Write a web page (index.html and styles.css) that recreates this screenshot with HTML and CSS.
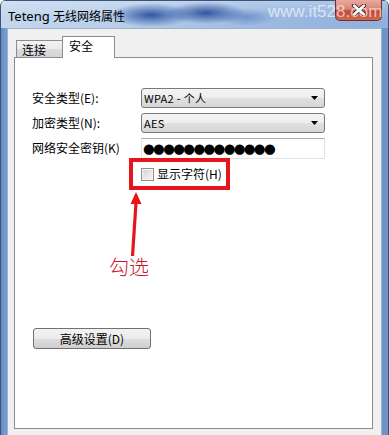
FILE: index.html
```html
<!DOCTYPE html>
<html lang="zh">
<head>
<meta charset="utf-8">
<title>Teteng 无线网络属性</title>
<link rel="stylesheet" href="styles.css">
</head>
<body>
<div class="window">
  <div class="titlebar">
    <span class="title">Teteng <span class="title-cjk">无线网络属性</span></span>
    <span class="watermark">www.it528.com</span>
    <span class="close"><svg width="16" height="12" viewBox="0 0 16 12"><path d="M3 1.5 L13 10.5 M13 1.5 L3 10.5" stroke="#3a2020" stroke-width="4.2" stroke-linecap="round"/><path d="M3 1.5 L13 10.5 M13 1.5 L3 10.5" stroke="#ffffff" stroke-width="2.4" stroke-linecap="round"/></svg></span>
  </div>
  <div class="client">
    <div class="tabs">
      <div class="tab">连接</div>
      <div class="tab active">安全</div>
    </div>
    <div class="panel">
      <div class="form">
        <span class="label">安全类型(E):</span>
        <div class="combo"><span>WPA2 - 个人</span><svg class="caret" width="7" height="4" viewBox="0 0 7 4"><path d="M0 0 H7 L3.5 4 Z" fill="#000"/></svg></div>
        <span class="label">加密类型(N):</span>
        <div class="combo"><span>AES</span><svg class="caret" width="7" height="4" viewBox="0 0 7 4"><path d="M0 0 H7 L3.5 4 Z" fill="#000"/></svg></div>
        <span class="label">网络安全密钥(K)</span>
        <div class="field"><span class="dots">●●●●●●●●●●●●●</span></div>
      </div>
      <div class="highlight">
        <span class="checkbox"></span>
        <span class="check-label">显示字符(H)</span>
      </div>
      <div class="annot">
        <svg class="arrow" width="40" height="66" viewBox="0 0 40 66"><path d="M27 12 L23.5 65" stroke="#e8141c" stroke-width="3.2" fill="none"/><path d="M27 1 L32.5 13 L21.5 13 Z" fill="#e8141c"/></svg>
        <span class="note">勾选</span>
      </div>
      <button class="btn">高级设置(D)</button>
    </div>
  </div>
</div>
</body>
</html>
```
FILE: styles.css
```css
* { box-sizing: border-box; }
html, body { margin: 0; padding: 0; }
body {
  width: 389px;
  height: 435px;
  overflow: hidden;
  font-family: "Noto Sans CJK SC", "Noto Sans", sans-serif;
  font-size: 12px;
  color: #000;
}
.window {
  width: 389px;
  height: 435px;
  display: flex;
  flex-direction: column;
  border-left: 1px solid #3b5478;
  border-right: 1px solid #3b5478;
  background: linear-gradient(90deg, #5f86bf 0, #7399cf 3px, #6d93c9 100%);
  border-radius: 6px 6px 0 0;
  overflow: hidden;
}
.titlebar {
  position: relative;
  height: 28px;
  flex: none;
  display: flex;
  align-items: center;
  padding-left: 7px;
  border-top: 1px solid #3b5478;
  background:
    radial-gradient(ellipse 42px 12px at 150px 14px, rgba(40,80,160,0.95), rgba(40,80,160,0)),
    radial-gradient(ellipse 40px 11px at 205px 12px, rgba(35,72,150,0.9), rgba(35,72,150,0)),
    radial-gradient(ellipse 30px 9px at 245px 16px, rgba(80,120,190,0.6), rgba(80,120,190,0)),
    linear-gradient(180deg, rgba(255,255,255,0.25), rgba(255,255,255,0) 60%),
    linear-gradient(90deg, #c3d7ee 0, #b9cfea 110px, #9ebbe2 250px, #8fb0dc 100%);
}
.title {
  font-family: "Noto Sans", "Noto Sans CJK SC", sans-serif;
  font-size: 13px;
  color: #000;
  line-height: 16px;
  margin-top: 2px;
}
.title-cjk {
  font-family: "Noto Sans CJK SC", sans-serif;
  font-size: 12px;
}
.watermark {
  position: absolute;
  left: 267px;
  top: 0;
  font-family: "Liberation Sans", sans-serif;
  font-size: 17px;
  line-height: 22px;
  color: rgba(255,255,255,0.62);
  z-index: 2;
}
.close {
  position: absolute;
  right: 6px;
  top: -1px;
  width: 47px;
  height: 21px;
  display: flex;
  align-items: center;
  justify-content: center;
  border: 1px solid #6a3030;
  border-top: none;
  border-radius: 0 0 5px 5px;
  background: linear-gradient(180deg, #e8aa9c 0, #d88577 45%, #c24a36 55%, #d0684c 100%);
  z-index: 1;
}
.client {
  flex: 1;
  margin: 0 6px;
  display: flex;
  flex-direction: column;
  background: #f0f0f0;
  border: 1px solid #9eb2cb;
  border-bottom: none;
  padding: 7px 0 6px 0;
}
.tabs {
  display: flex;
  align-items: flex-end;
  height: 21px;
  padding-left: 8px;
  flex: none;
}
.tab {
  width: 46px;
  height: 17px;
  border: 1px solid #898c95;
  border-bottom: none;
  border-right: none;
  background: linear-gradient(180deg, #f2f2f2 0, #ebebeb 50%, #dcdcdc 51%, #d4d4d4 100%);
  font-size: 12px;
  line-height: 16px;
  padding-left: 5px;
  padding-top: 1px;
}
.tab.active {
  width: 53px;
  height: 22px;
  margin-bottom: -1px;
  background: #fff;
  border-right: 1px solid #898c95;
  padding-left: 6px;
  padding-top: 0;
  line-height: 18px;
  position: relative;
  z-index: 1;
}
.panel {
  flex: 1;
  margin: 0 8px 0 6px;
  background: #fff;
  border: 1px solid #898c95;
  padding: 30px 0 0 17px;
  display: flex;
  flex-direction: column;
  align-items: flex-start;
}
.form {
  display: grid;
  grid-template-columns: 109px 184px;
  grid-auto-rows: 20px;
  row-gap: 5px;
  align-items: center;
}
.label {
  line-height: 20px;
}
.combo {
  height: 20px;
  border: 1px solid #7a7a7a;
  border-radius: 3px;
  background: linear-gradient(180deg, #f4f4f4 0, #ededed 50%, #e0e0e0 51%, #d6d6d6 100%);
  display: flex;
  align-items: center;
  justify-content: space-between;
  padding: 0 6px 0 2px;
  font-size: 11px;
  line-height: 18px;
  letter-spacing: 0.3px;
}
.field {
  height: 21px;
  border: 1px solid #dfe3e8;
  border-top-color: #abadb3;
  background: #fff;
  display: flex;
  align-items: center;
  padding-left: 1px;
  overflow: hidden;
}
.dots {
  font-family: "DejaVu Sans", sans-serif;
  font-size: 13.5px;
  letter-spacing: -1.7px;
  line-height: 18px;
}
.highlight {
  margin-left: 97px;
  width: 101px;
  height: 32px;
  border: 4px solid #e8141c;
  display: flex;
  align-items: center;
  gap: 3px;
  padding-left: 8px;
  background: #fff;
}
.checkbox {
  width: 13px;
  height: 13px;
  border: 1px solid #8f8f8f;
  background: linear-gradient(135deg, #d2d2d2 0, #eeeeee 70%, #f6f6f6 100%);
  box-shadow: inset 0 0 0 1px #f4f4f4;
}
.check-label {
  line-height: 16px;
}
.annot {
  margin-left: 77px;
  display: flex;
  flex-direction: column;
  margin-top: 1px;
}
.arrow { display: block; }
.note {
  font-size: 20px;
  line-height: 20px;
  color: #c8172b;
  font-family: "Noto Sans CJK SC", sans-serif;
  font-weight: 300;
}
.btn {
  margin-top: 51px;
  margin-left: 1px;
  width: 118px;
  height: 21px;
  border: 1px solid #707070;
  border-radius: 3px;
  background: linear-gradient(180deg, #f2f2f2 0, #ebebeb 50%, #dddddd 51%, #cfcfcf 100%);
  font-family: "Noto Sans CJK SC", sans-serif;
  font-size: 12px;
  line-height: 18px;
  padding: 0;
  color: #000;
}
```
